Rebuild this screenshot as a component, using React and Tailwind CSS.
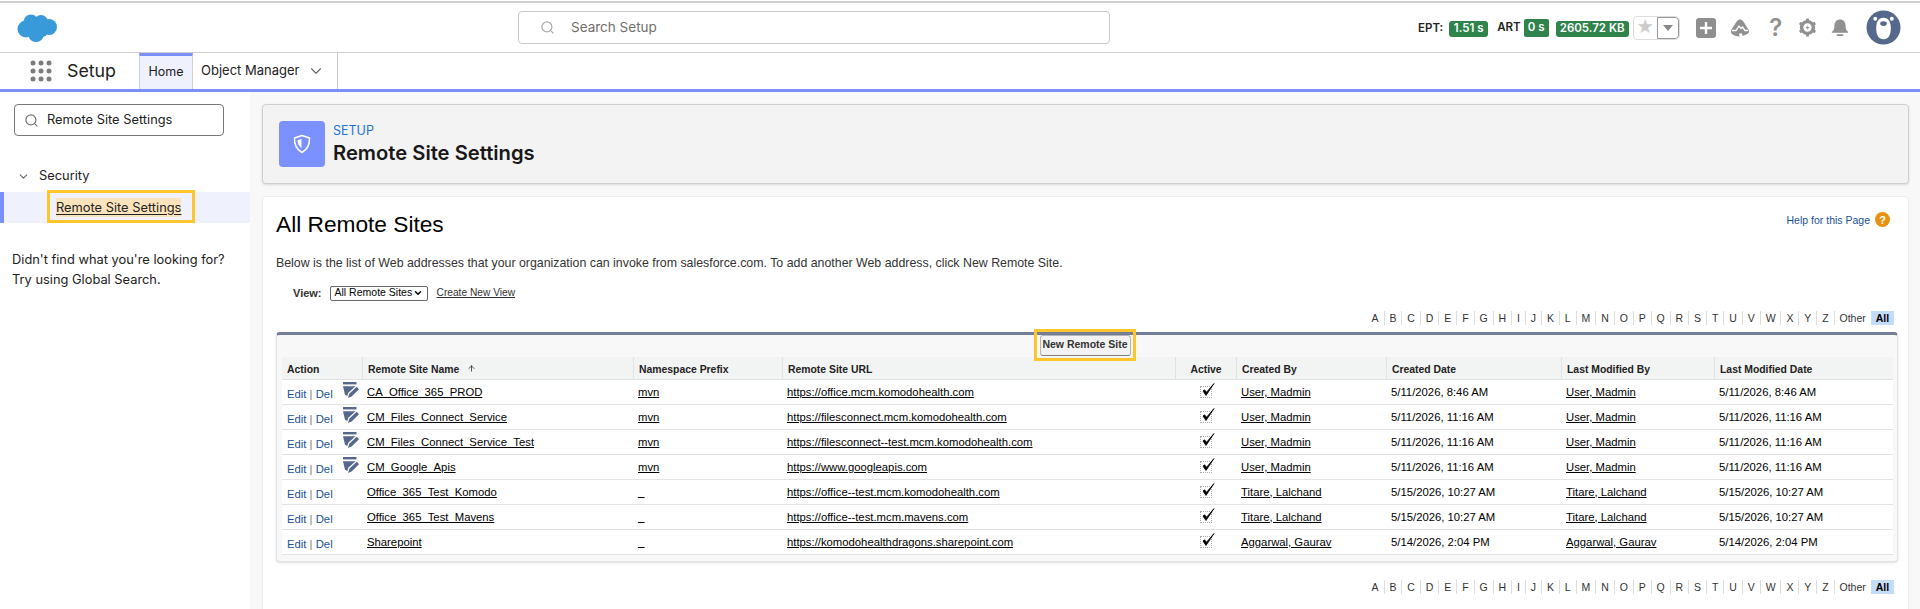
import React from 'react';
import { Search, ChevronDown, ArrowUp } from 'lucide-react';

const rows = [
  { name: 'CA_Office_365_PROD', managed: true, ns: 'mvn', url: 'https://office.mcm.komodohealth.com', by: 'User, Madmin', date: '5/11/2026, 8:46 AM' },
  { name: 'CM_Files_Connect_Service', managed: true, ns: 'mvn', url: 'https://filesconnect.mcm.komodohealth.com', by: 'User, Madmin', date: '5/11/2026, 11:16 AM' },
  { name: 'CM_Files_Connect_Service_Test', managed: true, ns: 'mvn', url: 'https://filesconnect--test.mcm.komodohealth.com', by: 'User, Madmin', date: '5/11/2026, 11:16 AM' },
  { name: 'CM_Google_Apis', managed: true, ns: 'mvn', url: 'https://www.googleapis.com', by: 'User, Madmin', date: '5/11/2026, 11:16 AM' },
  { name: 'Office_365_Test_Komodo', ns: '_', url: 'https://office--test.mcm.komodohealth.com', by: 'Titare, Lalchand', date: '5/15/2026, 10:27 AM' },
  { name: 'Office_365_Test_Mavens', ns: '_', url: 'https://office--test.mcm.mavens.com', by: 'Titare, Lalchand', date: '5/15/2026, 10:27 AM' },
  { name: 'Sharepoint', ns: '_', url: 'https://komodohealthdragons.sharepoint.com', by: 'Aggarwal, Gaurav', date: '5/14/2026, 2:04 PM' },
];

const letters = 'ABCDEFGHIJKLMNOPQRSTUVWXYZ'.split('');

function AlphaBar() {
  return (
    <div className="flex items-center justify-end pr-[4px] text-[10.5px] leading-[14px] text-[#333]">
      {letters.map((l) => (
        <span key={l} className="px-[4.94px] border-r border-[#ddd]">{l}</span>
      ))}
      <span className="px-[4.94px]">Other</span>
      <span className="px-[4.94px] bg-[#c4dcf7] font-bold text-black">All</span>
    </div>
  );
}

function CloudLogo() {
  return (
    <svg viewBox="0 0 40 28" className="w-10 h-7 fill-[#389ad9]">
      <circle cx="9" cy="15" r="8.5" />
      <circle cx="14" cy="8" r="7.5" />
      <circle cx="24" cy="8" r="7" />
      <circle cx="32" cy="13" r="8" />
      <circle cx="19" cy="20" r="8" />
      <circle cx="25" cy="17" r="6" />
    </svg>
  );
}

function EditIcon() {
  return (
    <svg viewBox="0 0 16 16" className="w-[16px] h-[16px] shrink-0">
      <rect x="0" y="0" width="13.5" height="2.4" fill="#56688c" />
      <path d="M0 4.200h12.500l-7.200 6.600-1 3.200-2.300-1.200z" fill="#56688c" />
      <path d="M5 16l1.300-4.300 7.400-6.900 2.300 2.400-7.400 7.200z" fill="#56688c" />
    </svg>
  );
}

function Check() {
  return (
    <span className="inline-block w-[12px] h-[12px] border border-dotted border-[#aaa] relative align-middle">
      <svg viewBox="0 0 16 16" className="absolute -top-[5px] -right-[5px] w-[16px] h-[16px]">
        <path d="M3 9l3 4.500L14 1.500 6.600 10.200 4.500 7.800z" fill="#000" stroke="#000" strokeWidth="0.8" strokeLinejoin="round" />
      </svg>
    </span>
  );
}

function TopBar() {
  return (
    <div className="h-[52px] border-t-2 border-b border-[#cfcfcf] bg-white flex items-center relative mt-px">
      <div className="w-[518px] pl-[17px] shrink-0"><CloudLogo /></div>
      <div className="w-[592px] h-[33px] border border-[#c9c9c9] rounded flex items-center text-[#706e6b] text-[13.5px] font-['Inter',sans-serif] shrink-0">
        <Search className="w-[15px] h-[15px] ml-[21px] mr-[16px] text-[#aaa]" />
        Search Setup
      </div>
      <div className="flex items-center ml-[308px] font-['Inter',sans-serif] text-[11.5px] font-semibold">
        <span className="text-[#222] mt-[2px]">EPT:</span>
        <span className="ml-[6px] mt-[2px] h-[16px] w-[39px] bg-[#2e844a] text-white rounded-[3px] flex items-center justify-center">1.51 s</span>
        <span className="ml-[9px] text-[#222]">ART</span>
        <span className="ml-[3px] mt-[1px] h-[18px] w-[25px] bg-[#2e844a] text-white rounded-[2px] flex items-center justify-center">0 s</span>
        <span className="ml-[7px] mt-[2px] h-[16px] w-[73px] bg-[#2e844a] text-white rounded-[3px] flex items-center justify-center">2605.72 KB</span>
        <div className="ml-[4px] h-[24px] w-[47px] flex rounded border border-[#ddd] overflow-hidden">
          <span className="w-[23px] flex items-center justify-center text-[#ccc] text-[17px] leading-none">★</span>
          <span className="flex-1 border border-[#999] rounded-r flex items-center justify-center">
            <svg viewBox="0 0 10 6" className="w-[10px] h-[6px] fill-[#888]"><path d="M0 0h10L5 6z" /></svg>
          </span>
        </div>
        <span className="ml-[16px] w-[20px] h-[20px] rounded-[3px] bg-[#8f8f8f] flex items-center justify-center">
          <svg viewBox="0 0 14 14" className="w-[14px] h-[14px]"><path d="M7 1v12M1 7h12" stroke="#fff" strokeWidth="2.4" /></svg>
        </span>
        <svg viewBox="0 0 20 20" className="ml-[14px] w-[20px] h-[20px] fill-[#919191]">
          <path d="M10 1.500c1.200 0 2.200.6 3 1.500l4.500 7c.8 1.200 1.500 2.300 1.500 3.500 0 1-.6 1.900-1.800 2.500l-4.400 2-1.300-3-2.600 1.100.9 2.400c-2.800-.1-4.900-.7-6.500-1.700C1.600 16 1 15 1 13.500c0-1.200.7-2.300 1.500-3.500L7 3c.8-.9 1.800-1.500 3-1.500z" />
          <path d="M2 12.500h4L9 8l2 2.500 1.500-1.500 2.500 3.500h3" fill="none" stroke="#fff" strokeWidth="1.300" />
        </svg>
        <span className="ml-[20px] w-[12px] text-[#919191] text-[24px] leading-none font-semibold flex justify-center">?</span>
        <svg viewBox="0 0 20 20" className="ml-[16px] w-[19px] h-[19px]">
          <circle cx="10" cy="10" r="6.200" fill="none" stroke="#919191" strokeWidth="3.600" />
          <g stroke="#919191" strokeWidth="3">
            <path d="M10 0.500v3M10 16.500v3M1.800 5.200l2.700 1.600M15.500 13.200l2.700 1.600M1.800 14.800l2.700-1.600M15.500 6.800l2.700-1.600" />
          </g>
          <path d="M10.800 7L8 10.800h2l-.6 2.400 2.600-3.600h-2z" fill="#919191" />
        </svg>
        <svg viewBox="0 0 20 20" className="ml-[13px] w-[20px] h-[20px] fill-[#919191]">
          <path d="M10 1.500c-3.500 0-5.600 2.700-5.600 6 0 3.800-.8 5-2.400 6.300-.4.400-.2 1 .4 1h15.200c.6 0 .8-.6.4-1-1.600-1.300-2.400-2.500-2.400-6.300 0-3.300-2.100-6-5.600-6z" />
          <rect x="6.500" y="16.200" width="7" height="1.800" rx=".9" />
        </svg>
        <svg viewBox="0 0 36 36" className="ml-[16px] w-[35px] h-[35px]">
          <circle cx="18" cy="18" r="17.500" fill="#56688c" />
          <circle cx="9.500" cy="9" r="2" fill="#fff" />
          <circle cx="26.500" cy="9" r="2" fill="#fff" />
          <path d="M18 8c5.500 0 7.500 4.500 7.500 10.500 0 6-1.500 11.500-7.500 11.500s-7.500-5.500-7.500-11.500C10.500 12.500 12.500 8 18 8z" fill="#fff" />
          <ellipse cx="18" cy="14" rx="3.400" ry="2.400" fill="#56688c" />
        </svg>
      </div>
    </div>
  );
}

function NavBar() {
  return (
    <div className="h-[39px] border-b-[3px] border-[#7b8ffb] bg-white flex font-['Inter',sans-serif] text-[#222]">
      <div className="w-[139px] shrink-0 flex items-center">
        <svg viewBox="0 0 22 22" className="ml-[30px] w-[22px] h-[22px] fill-[#7d7d7d]">
          {[3, 11, 19].map((y) => [3, 11, 19].map((x) => <circle key={`${x}-${y}`} cx={x} cy={y} r="2.500" />))}
        </svg>
        <span className="ml-[15px] text-[17.8px]">Setup</span>
      </div>
      <div className="w-[54px] border-t-[3px] border-t-[#7b8ffb] border-x border-x-[#d0d0d0] bg-[#eff2fd] flex items-center justify-center text-[12.5px]">Home</div>
      <div className="w-[145px] border-r border-[#c9c9c9] flex items-center pl-[8px] text-[13px]">
        Object Manager
        <ChevronDown className="w-[18px] h-[18px] ml-[8px] text-[#666]" strokeWidth={1.5} />
      </div>
    </div>
  );
}

function Sidebar() {
  return (
    <div className="w-[250px] shrink-0 bg-white pt-[12px] font-['Inter',sans-serif] text-[12.85px] text-[#222]">
      <div className="ml-[14px] w-[210px] h-[32px] border border-[#777] rounded flex items-center">
        <Search className="w-[15px] h-[15px] ml-[9px] mr-[8px] text-[#777]" />
        Remote Site Settings
      </div>
      <div className="mt-[30px] flex items-center pl-[17px] h-[20px]">
        <ChevronDown className="w-[13px] h-[13px] mr-[9px] text-[#666]" />
        Security
      </div>
      <div className="mt-[6px] h-[31px] bg-[#eff2fd] border-l-4 border-[#7b8ffb] relative flex items-center pl-[52px]">
        <span className="bg-[#fbe3bb] underline underline-offset-2">Remote Site Settings</span>
        <span className="absolute left-[43px] -top-[2px] w-[148px] h-[33px] border-[3px] border-[#fdc62d]" />
      </div>
      <div className="mt-[27px] pl-[12px] leading-[20px]">
        <div>Didn't find what you're looking for?</div>
        <div>Try using Global Search.</div>
      </div>
    </div>
  );
}

function SitesTable() {
  const cell = 'px-[5px] align-middle border-b border-[#e3e3e3]';
  const head = 'px-[5px] pt-[3px] font-bold text-[10.4px] text-[#222] border-b border-l border-[#e0e3e5] first:border-l-0';
  return (
    <table className="table-fixed border-separate border-spacing-0 w-[1611px] bg-white text-[11.3px]">
      <colgroup>
        <col className="w-[80px]" />
        <col className="w-[271px]" />
        <col className="w-[149px]" />
        <col className="w-[393px]" />
        <col className="w-[61px]" />
        <col className="w-[150px]" />
        <col className="w-[175px]" />
        <col className="w-[153px]" />
        <col className="w-[179px]" />
      </colgroup>
      <thead>
        <tr className="h-[23px] bg-[#f2f3f3]">
          <th className={head + ' text-left'}>Action</th>
          <th className={head + ' text-left'}>Remote Site Name <ArrowUp className="inline w-[9px] h-[9px] ml-[5px] align-baseline" /></th>
          <th className={head + ' text-left'}>Namespace Prefix</th>
          <th className={head + ' text-left'}>Remote Site URL</th>
          <th className={head + ' text-center'}>Active</th>
          <th className={head + ' text-left'}>Created By</th>
          <th className={head + ' text-left'}>Created Date</th>
          <th className={head + ' text-left'}>Last Modified By</th>
          <th className={head + ' text-left'}>Last Modified Date</th>
        </tr>
      </thead>
      <tbody>
        {rows.map((r) => (
          <tr key={r.name} className="h-[25px] text-black">
            <td className={cell + ' whitespace-nowrap text-[#1b5297]'}>
              <div className="flex items-center h-[24px]">
                <span className="pt-[4px] w-[56px] shrink-0">Edit <span className="text-[#777]">|</span> Del</span>
                {r.managed && <span className="-mt-[5px]"><EditIcon /></span>}
              </div>
            </td>
            <td className={cell}><span className="underline">{r.name}</span></td>
            <td className={cell}><span className="underline">{r.ns}</span></td>
            <td className={cell}><span className="underline">{r.url}</span></td>
            <td className={cell + ' text-center leading-none'}><Check /></td>
            <td className={cell}><span className="underline">{r.by}</span></td>
            <td className={cell}>{r.date}</td>
            <td className={cell}><span className="underline">{r.by}</span></td>
            <td className={cell}>{r.date}</td>
          </tr>
        ))}
      </tbody>
    </table>
  );
}

export default function App() {
  return (
    <div className="w-full h-screen overflow-hidden bg-white flex flex-col font-['Liberation_Sans',sans-serif]">
      <TopBar />
      <NavBar />
      <div className="flex flex-1 min-h-0">
        <Sidebar />
        <div className="flex-1 bg-[#f8f8f8] pl-[12px] pr-[12px] pt-[12px]">
          <div className="h-[80px] rounded border border-[#d0d0d0] shadow-sm bg-[#f3f3f3] flex items-center pl-[16px] font-['Inter',sans-serif]">
            <div className="w-[46px] h-[46px] rounded bg-[#7a91ff] flex items-center justify-center">
              <svg viewBox="0 0 20 20" className="w-[20px] h-[20px]">
                <path d="M10 1.500l7.500 2.500c.3 5.500-2.200 11.500-7.500 14.500C4.700 15.500 2.200 9.500 2.500 4z" fill="none" stroke="#fff" strokeWidth="1.500" strokeLinejoin="round" />
                <path d="M9.500 5L5.500 6.300c0 3.200 1.400 6 4 8z" fill="#fff" />
              </svg>
            </div>
            <div className="ml-[8px]">
              <div className="text-[12.5px] leading-[18px] text-[#1b76d8]">SETUP</div>
              <div className="text-[20.2px] leading-[26px] font-semibold text-[#181818]">Remote Site Settings</div>
            </div>
          </div>
          <div className="mt-[12px] h-[500px] bg-white rounded border border-[#ececec] pl-[13px] pr-[10px]">
            <div className="flex items-start justify-between pt-[14px]">
              <div className="text-[22.7px] leading-[28px] text-black -mt-[1px]">All Remote Sites</div>
              <div className="flex items-center text-[10.5px] text-[#1b5297] pr-[8px] pt-[2px]">
                Help for this Page
                <span className="ml-[5px] -mt-[2px] w-[15px] h-[15px] rounded-full bg-[#e8920f] text-white text-[11px] font-bold flex items-center justify-center">?</span>
              </div>
            </div>
            <div className="mt-[17px] text-[12.36px] leading-[16px] text-[#333]">
              Below is the list of Web addresses that your organization can invoke from salesforce.com. To add another Web address, click New Remote Site.
            </div>
            <div className="mt-[13px] flex items-center pl-[17px] text-[10.5px] text-[#333] h-[18px] whitespace-nowrap">
              <span className="font-bold text-[11px]">View:</span>
              <span className="ml-[8px] h-[15px] w-[98px] border border-[#666] rounded-[2px] flex items-center justify-between px-[4px] text-black">
                All Remote Sites
                <ChevronDown className="w-[10px] h-[10px]" strokeWidth={3.5} />
              </span>
              <span className="ml-[9px] text-[10.2px] underline">Create New View</span>
            </div>
            <div className="mt-[9px]"><AlphaBar /></div>
            <div className="mt-[7px] h-[230px] w-[1622px] border-t-[3px] border-[#747e96] rounded bg-[#f8f8f8] border-x border-b border-x-[#e3e3e3] border-b-[#e3e3e3] pl-[5px] pr-[6px] relative shadow-sm">
              <div className="h-[22px]">
                <span className="absolute left-[757px] top-[-6px] w-[102px] h-[32px] border-[3px] border-[#fdc62d] flex items-center justify-center">
                  <span className="w-[91px] h-[21px] rounded-[3px] border border-[#b5b5b5] border-b-[#7f7f7f] bg-[#f2f2f2] text-[10.5px] font-bold text-[#333] flex items-center justify-center whitespace-nowrap">New Remote Site</span>
                </span>
              </div>
              <SitesTable />
            </div>
            <div className="mt-[18px]"><AlphaBar /></div>
          </div>
        </div>
      </div>
    </div>
  );
}
